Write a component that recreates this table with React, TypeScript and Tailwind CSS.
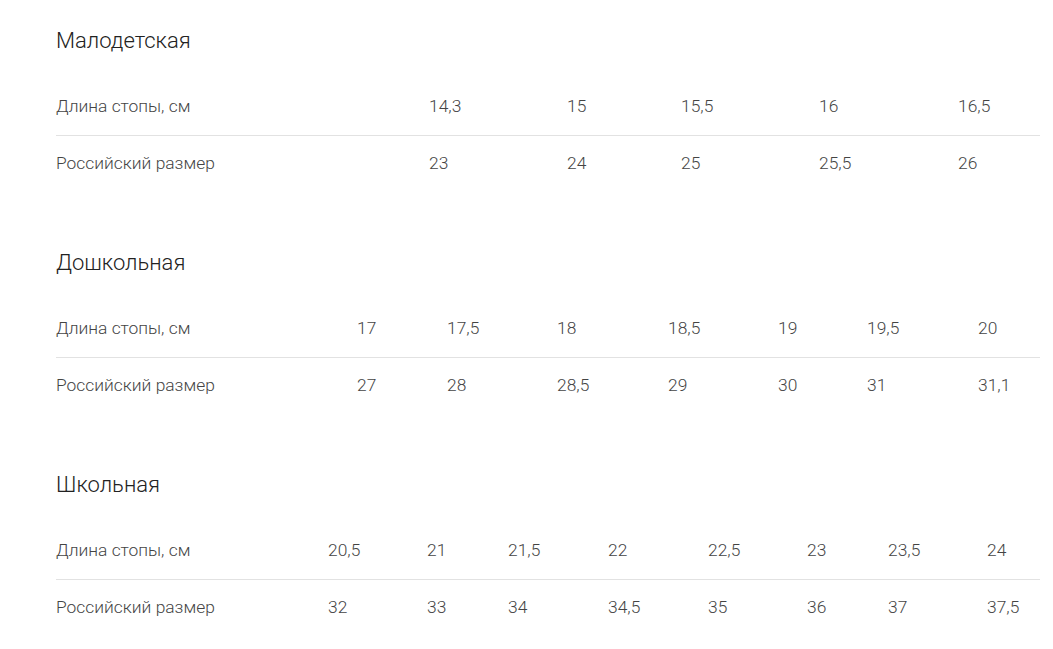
import React from 'react';

type Section = {
  title: string;
  cols: string;
  foot: string[];
  ru: string[];
};

const sections: Section[] = [
  {
    title: 'Малодетская',
    cols: 'grid-cols-[373px_138px_114px_138px_139px_1fr]',
    foot: ['14,3', '15', '15,5', '16', '16,5'],
    ru: ['23', '24', '25', '25,5', '26'],
  },
  {
    title: 'Дошкольная',
    cols: 'grid-cols-[301px_90px_110px_111px_110px_89px_111px_1fr]',
    foot: ['17', '17,5', '18', '18,5', '19', '19,5', '20'],
    ru: ['27', '28', '28,5', '29', '30', '31', '31,1'],
  },
  {
    title: 'Школьная',
    cols: 'grid-cols-[272px_99px_81px_100px_100px_99px_81px_99px_1fr]',
    foot: ['20,5', '21', '21,5', '22', '22,5', '23', '23,5', '24'],
    ru: ['32', '33', '34', '34,5', '35', '36', '37', '37,5'],
  },
];

const Row: React.FC<{ cols: string; label: string; values: string[]; first?: boolean }> = ({
  cols,
  label,
  values,
  first,
}) => (
  <div
    className={`grid items-center ${cols} ${
      first ? 'h-[59px] border-b border-[#e2e2e2]' : 'h-[54px]'
    }`}
  >
    <div>{label}</div>
    {values.map((v, i) => (
      <div key={i}>{v}</div>
    ))}
  </div>
);

const App: React.FC = () => {
  return (
    <div className="min-h-screen bg-white pl-14 pr-[13px] pt-[27px] font-['Roboto',sans-serif] font-light">
      {sections.map((s, i) => (
        <div key={s.title} className={i > 0 ? 'mt-[59px]' : ''}>
          <h2 className="mb-[22px] h-7 text-[22px] leading-7 text-[#222]">{s.title}</h2>
          <div className="text-[17.4px] text-[#444]">
            <Row cols={s.cols} label="Длина стопы, см" values={s.foot} first />
            <Row cols={s.cols} label="Российский размер" values={s.ru} />
          </div>
        </div>
      ))}
    </div>
  );
};

export default App;
